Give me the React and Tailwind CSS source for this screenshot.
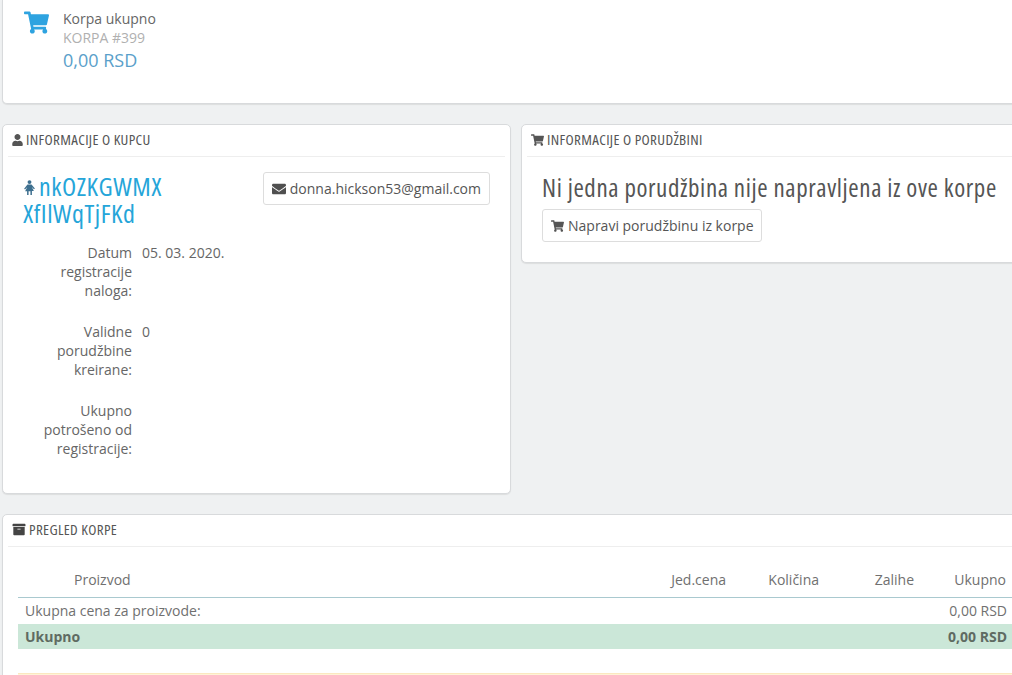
import React from "react";
import { FaShoppingCart, FaUser, FaEnvelope, FaArchive } from "react-icons/fa";

const heading = { fontFamily: '"Open Sans",sans-serif', fontStretch: "75%" };

function Card({ className = "", children }) {
  return <div className={"bg-white border border-[#d8dadc] rounded-[5px] shadow-[0_1px_1px_rgba(0,0,0,0.08)] " + className}>{children}</div>;
}

function CardHeader({ icon, children }) {
  return (
    <div className="h-[32px] mx-[5px] pl-[4px] pb-[2px] flex items-center gap-[3px] border-b border-[#eeeeee] text-[#555555] text-[15px]">
      {icon}
      <span style={heading} className="tracking-[0.35px]">{children}</span>
    </div>
  );
}

function Info({ label, value }) {
  return (
    <div className="flex gap-[10px] mb-[22px]">
      <div className="w-[129px] text-right leading-[19px]">{label}</div>
      <div className="leading-[19px]">{value}</div>
    </div>
  );
}

function FemaleIcon() {
  return (
    <svg viewBox="0 0 14 16" className="inline-block w-[13px] h-[15px] mr-[3px] -mt-[3px] text-[#3d6f8f]" fill="currentColor">
      <circle cx="7" cy="2.2" r="2.1" />
      <path d="M4.8 4.8h4.4l3.6 4.2-1 .8-2.3-2.3 2.2 4.3H9.6V16H8v-3.9H6V16H4.4v-3.9H2.3l2.2-4.3-2.3 2.3-1-.8z" />
    </svg>
  );
}

export default function App() {
  return (
    <div className="w-[1012px] h-[675px] overflow-hidden bg-[#eff1f2] text-[#666666] text-[14px]" style={{ fontFamily: '"Open Sans",sans-serif' }}>
      <div className="w-[1040px] pl-[2px]">
        <Card className="h-[104px] rounded-t-none border-t-0 flex pl-[21px] pt-[10px] gap-[14px]">
          <FaShoppingCart className="w-[25px] h-[23px] mt-[1px] text-[#2ea3e0]" />
          <div>
            <div className="leading-[18px] text-[#666666]">Korpa ukupno</div>
            <div className="leading-[19px] text-[#b0b0b0]">KORPA #399</div>
            <div className="leading-[26px] text-[18px] text-[#5a9fca]">0,00 RSD</div>
          </div>
        </Card>

        <div className="flex items-start gap-[10px] mt-[20px]">
          <Card className="w-[509px] h-[370px] shrink-0">
            <CardHeader icon={<FaUser className="w-[11px] h-[12px] text-[#555555]" />}>INFORMACIJE O KUPCU</CardHeader>
            <div className="px-[20px] pt-[15px]">
              <div className="flex justify-between items-start">
                <h2 className="w-[160px] text-[26px] leading-[27px] tracking-[0.55px] text-[#25a5d9] pt-[1px]" style={heading}>
                  <FemaleIcon />
                  nkOZKGWMX XfIlWqTjFKd
                </h2>
                <div className="h-[33px] flex items-center gap-[4px] border border-[#dddddd] rounded-[3px] px-[8px] text-[#555555]">
                  <FaEnvelope className="w-[14px] h-[14px] text-[#4f4f4f]" />
                  donna.hickson53@gmail.com
                </div>
              </div>
              <div className="mt-[16px] -ml-[20px]">
                <Info label={<>Datum<br />registracije<br />naloga:</>} value="05. 03. 2020." />
                <Info label={<>Validne<br />porudžbine<br />kreirane:</>} value="0" />
                <Info label={<>Ukupno<br />potrošeno od<br />registracije:</>} value="" />
              </div>
            </div>
          </Card>

          <Card className="flex-1 h-[139px]">
            <CardHeader icon={<FaShoppingCart className="w-[13px] h-[12px] text-[#555555]" />}>INFORMACIJE O PORUDŽBINI</CardHeader>
            <div className="px-[20px] pt-[16px]">
              <h2 className="text-[25px] leading-[29px] tracking-[0.6px] text-[#555555]" style={heading}>Ni jedna porudžbina nije napravljena iz ove korpe</h2>
              <div className="inline-flex mt-[7px] h-[33px] items-center gap-[4px] border border-[#dddddd] rounded-[3px] pl-[8px] pr-[7px] text-[#555555]">
                <FaShoppingCart className="w-[13px] h-[12px]" />
                Napravi porudžbinu iz korpe
              </div>
            </div>
          </Card>
        </div>

        <Card className="mt-[20px] h-[200px]">
          <CardHeader icon={<FaArchive className="w-[14px] h-[13px] text-[#444444]" />}>PREGLED KORPE</CardHeader>
          <div className="ml-[15px] w-[996px] mt-[17px]">
            <div className="grid grid-cols-[1fr_60px_93px_95px_92px] h-[34px] items-start pt-[7px] pr-[8px] border-b border-[#a9c9cf] leading-[18px] text-[#707070]">
              <div className="pl-[56px]">Proizvod</div>
              <div className="text-right">Jed.cena</div>
              <div className="text-right">Količina</div>
              <div className="text-right">Zalihe</div>
              <div className="text-right">Ukupno</div>
            </div>
            <div className="flex justify-between items-center h-[26px] px-[7px] pb-[2px] text-[#707070]">
              <span>Ukupna cena za proizvode:</span>
              <span>0,00 RSD</span>
            </div>
            <div className="flex justify-between items-center h-[25px] px-[7px] bg-[#cbe7d8] font-bold text-[#5f6b62]">
              <span>Ukupno</span>
              <span>0,00 RSD</span>
            </div>
            <div className="mt-[24px] h-[20px] bg-[#fff3d7] border-t border-[#fbe8c0]" />
          </div>
        </Card>
      </div>
    </div>
  );
}
